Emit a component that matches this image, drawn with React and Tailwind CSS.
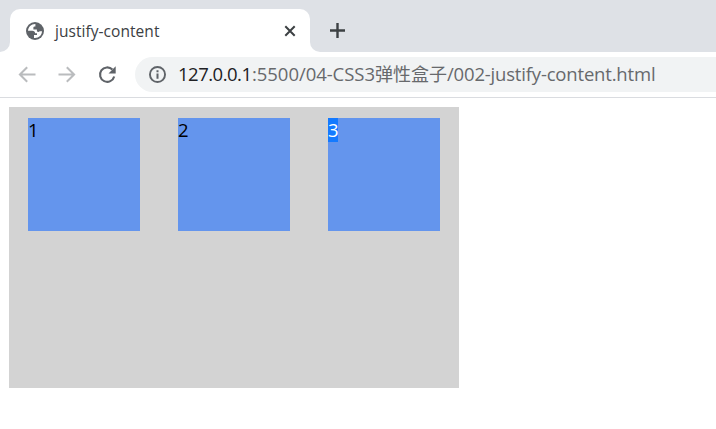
function GlobeIcon() {
  return (
    <svg viewBox="0 0 18 18" className="h-[18px] w-[18px] shrink-0">
      <circle cx="9" cy="9" r="9" fill="#5f6368" />
      <path
        d="M9.4 1.9 C5.2 1.8 2.2 4.8 2 8.8 L6.2 8.8 C8.2 8.8 9.1 9.8 9.1 11.2 L11 11.2 L11 12.9 L8 12.9 L8 15.9 C12.6 16.5 16 13 16 9.2 L13.6 9.2 C13 10.2 11.5 10 10.9 9.2 L10.9 7.6 L7.4 7.6 L7.4 5.7 C7.4 4.8 8.2 4.6 9.4 4.6 Z"
        fill="#fff"
      />
    </svg>
  );
}

function ArrowIcon({ flip = false }) {
  return (
    <svg viewBox="0 0 18 18" className={flip ? "h-[18px] w-[18px] -scale-x-100" : "h-[18px] w-[18px]"} fill="none" stroke="#babcbe" strokeWidth="2">
      <path d="M17.5 8.5H2.5M9.2 1.2 1.9 8.5l7.3 7.3" />
    </svg>
  );
}

function ReloadIcon() {
  return (
    <svg viewBox="0 0 18 18" className="h-[18px] w-[18px]">
      <path d="M14.4 3.6A7.2 7.2 0 1 0 16.2 10.4" fill="none" stroke="#5f6368" strokeWidth="2.1" />
      <path d="M17.7 .2v7.2h-7.2z" fill="#5f6368" />
    </svg>
  );
}

function InfoIcon() {
  return (
    <svg viewBox="0 0 16 16" className="h-[17px] w-[17px] shrink-0">
      <circle cx="8" cy="8" r="7.1" fill="none" stroke="#5f6368" strokeWidth="1.8" />
      <path d="M8 7v5M8 4v1.9" stroke="#5f6368" strokeWidth="1.9" />
    </svg>
  );
}

function Box({ children }) {
  return <div className="h-[113px] w-28 bg-[#6495ed] leading-6">{children}</div>;
}

export default function App() {
  return (
    <div className={`h-[429px] w-[716px] overflow-hidden bg-white font-["Open_Sans","Noto_Sans_CJK_SC",sans-serif]`}>
      <div className="h-[9px] bg-[#dee1e6]" />
      <div className="flex h-[43px]">
        <div className="w-2.5 rounded-br-[10px] bg-[#dee1e6]" />
        <div className="w-[300px] bg-[#dee1e6]">
          <div className="flex h-full items-center rounded-t-[10px] bg-white pr-[14px] pl-4">
            <GlobeIcon />
            <span className="ml-[11px] pt-[3px] text-[15.5px] tracking-[0.05px] text-[#3c4043]">justify-content</span>
            <svg viewBox="0 0 12 12" className="ml-auto h-3 w-3" stroke="#3c4043" strokeWidth="2">
              <path d="m1.3 1.3 9.4 9.4M10.7 1.3l-9.4 9.4" />
            </svg>
          </div>
        </div>
        <div className="flex flex-1 items-center rounded-bl-[10px] bg-[#dee1e6] pl-5">
          <svg viewBox="0 0 15 15" className="h-[15px] w-[15px]" stroke="#3c4043" strokeWidth="2.4">
            <path d="M0 7.5h15M7.5 0v15" />
          </svg>
        </div>
      </div>
      <div className="flex h-[46px] items-start border-b border-[#dadce0] pt-[5px] pl-[18px]">
        <div className="flex h-[35px] items-center gap-[22px]">
          <ArrowIcon />
          <ArrowIcon flip />
          <ReloadIcon />
        </div>
        <div className="ml-[19px] flex h-[35px] flex-1 items-center rounded-l-full bg-[#f1f3f4] pl-[14px] text-[18.5px] whitespace-nowrap text-[#67696c]">
          <InfoIcon />
          <div className="ml-3 flex items-baseline pb-0.5">
            <span className="w-[74px] tracking-[-0.5px] text-[#202124]">127.0.0.1</span>
            <span className="w-[123px] tracking-[-0.05px]">:5500/04-CSS3</span>
            <span className="w-[72px] text-[18px]">弹性盒子</span>
            <span className="tracking-[-0.18px]">/002-justify-content.html</span>
          </div>
        </div>
      </div>
      <div className="pt-[9px] pl-[9px]">
        <div className="flex h-[281px] w-[450px] items-start justify-around bg-[#d3d3d3] pt-[11px] text-[18.5px] text-black">
          <Box>1</Box>
          <Box>2</Box>
          <Box>
            <span className="block h-6 w-2.5 bg-[#147aff] text-white">3</span>
          </Box>
        </div>
      </div>
    </div>
  );
}
